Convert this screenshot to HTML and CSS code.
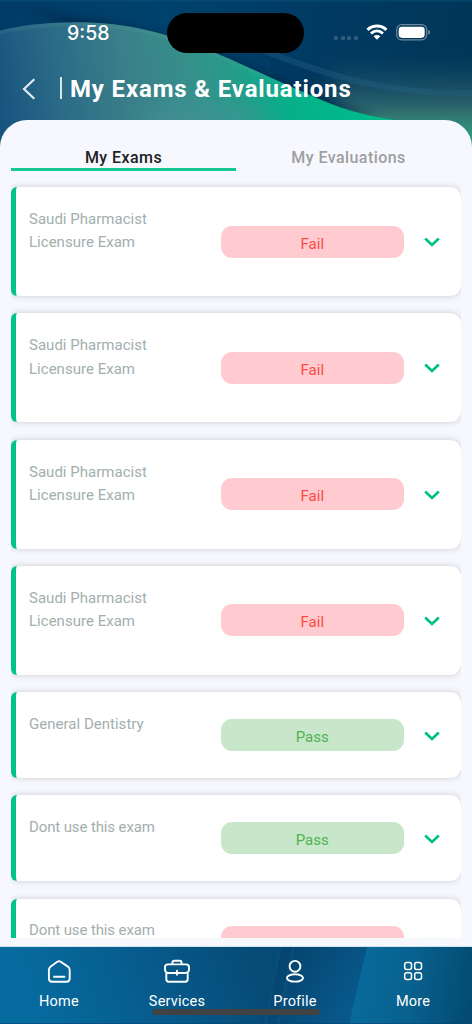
FILE: index.html
```html
<!DOCTYPE html>
<html lang="en">
<head>
<meta charset="utf-8">
<title>My Exams &amp; Evaluations</title>
<link rel="stylesheet" href="styles.css">
</head>
<body>
<svg width="0" height="0" class="defs"><symbol id="chevron" viewBox="0 0 16 10"><path d="M1.2 1.5 8 7.9l6.8-6.4" fill="none" stroke="#00bf88" stroke-width="2.7"/></symbol></svg>
<div class="app">
  <svg class="waves" viewBox="0 0 472 160" preserveAspectRatio="none">
    <defs>
      <linearGradient id="sky" x1="0" y1="0" x2="1" y2="0"><stop offset="0" stop-color="#003c66"/><stop offset=".35" stop-color="#00426d"/><stop offset=".65" stop-color="#003b63"/><stop offset="1" stop-color="#003658"/></linearGradient>
      <linearGradient id="hill" gradientUnits="userSpaceOnUse" x1="0" y1="110" x2="340" y2="60"><stop offset="0" stop-color="#18547f"/><stop offset=".18" stop-color="#2b6b87"/><stop offset=".38" stop-color="#3a7f89"/><stop offset=".55" stop-color="#368f8b"/><stop offset=".68" stop-color="#279b8a"/><stop offset=".82" stop-color="#08ae89"/><stop offset="1" stop-color="#00b98a"/></linearGradient>
      <linearGradient id="haze" gradientUnits="userSpaceOnUse" x1="0" y1="60" x2="0" y2="140"><stop offset="0" stop-color="#3e7273" stop-opacity="0"/><stop offset=".5" stop-color="#3e7273" stop-opacity=".55"/><stop offset=".75" stop-color="#3f8476" stop-opacity=".95"/><stop offset="1" stop-color="#23a283"/></linearGradient>
      <filter id="soft" color-interpolation-filters="sRGB" x="-20%" y="-50%" width="140%" height="200%"><feGaussianBlur stdDeviation="5"/></filter>
      <filter id="softer" color-interpolation-filters="sRGB" x="-40%" y="-80%" width="180%" height="260%"><feGaussianBlur stdDeviation="10"/></filter>
      <filter id="edge" color-interpolation-filters="sRGB"><feGaussianBlur stdDeviation=".5"/></filter>
    </defs>
    <rect width="472" height="160" fill="url(#sky)"/>
    <path d="M0 0h472v1.500H0z" fill="#075078" opacity=".6"/>
    <path d="M265 50C325 73 380 96 472 93V160H300z" fill="#002f52" opacity=".25"/>
    <path d="M330 60H530V190H330z" fill="url(#haze)" filter="url(#softer)"/>
    <path d="M255 48C325 73 380 95 472 93" fill="none" stroke="#26658a" stroke-width="6" opacity=".35"/>
    <path d="M20 5C90 28 130 15 240 63S350 105 380 118L190 80z" fill="#002747" opacity=".85" filter="url(#soft)"/>
    <path d="M-4 31.500C40 20 95 20 135 27.500C195 40 235 62 285 84S345 112 400 121V164H-4z" fill="url(#hill)" filter="url(#edge)"/>
    <ellipse cx="205" cy="118" rx="65" ry="14" fill="#4a929a" opacity=".5" filter="url(#softer)"/>
    <path d="M-4 33.500C40 22 95 22 135 29.500C195 42 235 64 285 86" fill="none" stroke="#66aaa3" stroke-width="4" opacity=".15"/>
  </svg>
  <header class="top">
    <div class="status">
      <span class="clock">9:58</span>
      <span class="island"></span>
      <span class="dots"><i></i><i></i><i></i><i></i></span>
      <svg class="wifi" viewBox="0 0 22 16"><g fill="none" stroke="#fff" stroke-width="3"><path d="M1.500 5.800C7 .7 15 .7 20.500 5.800"/><path d="M5 9.500C8.600 6.200 13.400 6.200 17 9.500"/></g><path d="M7.600 12.300C9.500 10.600 12.500 10.600 14.400 12.300L11 15.700z" fill="#fff"/></svg>
      <svg class="battery" viewBox="0 0 35 17"><rect x=".7" y=".7" width="30" height="15.200" rx="5" fill="none" stroke="#6f889d" stroke-width="1.200"/><rect x="2.700" y="2.700" width="26" height="11.200" rx="3.300" fill="#fff"/><path d="M32.300 5.800c2.200.7 2.200 4.300 0 5z" fill="#8298ab"/></svg>
    </div>
    <div class="titlebar">
      <svg class="back" viewBox="0 0 14 22"><path d="M12.300 1.300 2 11l10.300 9.700" fill="none" stroke="#e3ebf0" stroke-width="2.200"/></svg>
      <span class="bar"></span>
      <h1>My Exams &amp; Evaluations</h1>
    </div>
  </header>
  <main class="sheet">
    <div class="tabs"><div class="tab active"><span>My Exams</span></div><div class="tab"><span>My Evaluations</span></div></div>
    <div class="list">
      <article class="card tall"><p>Saudi Pharmacist<br>Licensure Exam</p><span class="pill fail">Fail</span><svg class="chev"><use href="#chevron"/></svg></article>
      <article class="card tall"><p>Saudi Pharmacist<br>Licensure Exam</p><span class="pill fail">Fail</span><svg class="chev"><use href="#chevron"/></svg></article>
      <article class="card tall"><p>Saudi Pharmacist<br>Licensure Exam</p><span class="pill fail">Fail</span><svg class="chev"><use href="#chevron"/></svg></article>
      <article class="card tall"><p>Saudi Pharmacist<br>Licensure Exam</p><span class="pill fail">Fail</span><svg class="chev"><use href="#chevron"/></svg></article>
      <article class="card"><p>General Dentistry</p><span class="pill pass">Pass</span><svg class="chev"><use href="#chevron"/></svg></article>
      <article class="card"><p class="snug">Dont use this exam</p><span class="pill pass">Pass</span><svg class="chev"><use href="#chevron"/></svg></article>
      <article class="card"><p class="snug">Dont use this exam</p><span class="pill fail"></span><svg class="chev"><use href="#chevron"/></svg></article>
    </div>
  </main>
  <nav class="nav">
    <svg class="navbg" viewBox="0 0 472 77" preserveAspectRatio="none">
      <defs>
        <linearGradient id="n1" gradientUnits="userSpaceOnUse" x1="30" y1="77" x2="250" y2="0"><stop offset="0" stop-color="#066ca0"/><stop offset=".45" stop-color="#075e90"/><stop offset="1" stop-color="#064b77"/></linearGradient>
        <linearGradient id="n2" gradientUnits="userSpaceOnUse" x1="290" y1="0" x2="360" y2="40"><stop offset="0" stop-color="#05446f"/><stop offset="1" stop-color="#08588a"/></linearGradient>
        <linearGradient id="n3" gradientUnits="userSpaceOnUse" x1="355" y1="30" x2="472" y2="45"><stop offset="0" stop-color="#086b9c"/><stop offset=".5" stop-color="#08608d"/><stop offset="1" stop-color="#034b72"/></linearGradient>
      </defs>
      <rect width="472" height="77" fill="url(#n1)"/>
      <path d="M280 0H368L349 77H262z" fill="url(#n2)"/>
      <path d="M279 0h3l-15 77h-4zM292 0h3l-15 77h-4z" fill="#116397" opacity=".25"/>
      <path d="M367 0H472V77H349z" fill="url(#n3)"/>
      <path d="M0 76h472v1H0z" fill="#034675" opacity=".6"/>
    </svg>
    <a class="item"><svg viewBox="0 0 26 26"><path d="M2.900 11.200Q2.900 8.900 4.700 7.600L11.300 2.800Q13 1.600 14.700 2.800L21.900 7.600Q23.700 8.900 23.700 11.200V19.500Q23.700 22.700 20.500 22.700H6.100Q2.900 22.700 2.900 19.500ZM8 17.700H18.500"/></svg><span>Home</span></a>
    <a class="item"><svg viewBox="0 0 26 26"><path d="M4 5.400H22Q25 5.400 25 8.200V10.500Q25 14 20.500 14H5.500Q1 14 1 10.500V8.200Q1 5.400 4 5.400ZM2.300 13.600V20.300Q2.300 22.700 4.700 22.700H21.300Q23.700 22.700 23.700 20.300V13.600M8.400 5.200V3.700Q8.400 1.800 10.300 1.800H15.700Q17.600 1.800 17.600 3.700V5.200M13 11.800V15.800"/></svg><span>Services</span></a>
    <a class="item"><svg viewBox="0 0 26 26"><circle cx="13" cy="7.300" r="5.400"/><ellipse cx="13" cy="18.900" rx="8" ry="3.700"/></svg><span>Profile</span></a>
    <a class="item"><svg class="grid" viewBox="0 0 26 26"><rect x="4.700" y="3.600" width="6.800" height="6.800" rx="2"/><rect x="14.700" y="3.600" width="6.800" height="6.800" rx="2"/><rect x="4.700" y="13.800" width="6.800" height="6.800" rx="2"/><rect x="14.700" y="13.800" width="6.800" height="6.800" rx="2"/></svg><span>More</span></a>
    <span class="indicator"></span>
  </nav>
</div>
</body>
</html>
```
FILE: styles.css
```css
* { box-sizing: border-box; }
body { margin: 0; font-family: Roboto, "Open Sans", sans-serif; background: #f7f8fd; }
.defs { position: absolute; }
.app { position: relative; width: 472px; height: 1024px; overflow: hidden; display: flex; flex-direction: column; }
.waves { position: absolute; top: 0; left: 0; width: 472px; height: 160px; }
.top { position: relative; height: 120px; flex: none; color: #fff; }
.status { display: flex; align-items: center; height: 66px; padding: 0 41px 0 67px; }
.clock { width: 100px; font: 500 19.5px/24px Inter, sans-serif; letter-spacing: 0; }
.island { width: 138px; height: 40px; border-radius: 20px; background: #000; }
.dots { display: flex; gap: 2.700px; margin: 9px 0 0 30px; }
.dots i { width: 4px; height: 4px; border-radius: 1.500px; background: #345c7a; }
.wifi { width: 22px; height: 16px; margin: -2px 0 0 8px; }
.battery { width: 35px; height: 17px; margin: -2px 0 0 8px; flex: none; }
.titlebar { display: flex; align-items: center; height: 46px; padding-left: 22px; }
.back { width: 14px; height: 22px; }
.bar { width: 2px; height: 22px; margin: -2px 8px 0 24px; background: #d7e7e8; }
h1 { margin: 0; font-size: 24px; line-height: 30px; font-weight: 700; letter-spacing: 0.85px; white-space: nowrap; }
.sheet { position: relative; height: 827px; flex: none; padding: 22px 11px 9px; background: #f7f8fd; border-radius: 27px 27px 0 0; display: flex; flex-direction: column; }
.tabs { display: flex; height: 29px; flex: none; }
.tab { width: 225px; text-align: center; font-size: 16px; line-height: 31px; font-weight: 500; letter-spacing: 0.43px; color: #9d9fa1; }
.tab.active { color: #202124; border-bottom: 3px solid #16c893; }
.list { flex: 1; min-height: 0; overflow: hidden; padding-top: 16px; display: flex; flex-direction: column; gap: 17.300px; }
.card { flex: none; display: flex; height: 86px; align-items: center; background: #fff; border-left: 5px solid #00c389; border-radius: 6px 11px 11px 6px; box-shadow: 0 0 6px rgba(40, 45, 60, 0.22); padding-left: 13px; }
.card.tall { height: 109px; }
.card p { align-self: flex-start; width: 191.500px; margin: 21px 0 0; font-size: 15px; line-height: 23.300px; letter-spacing: 0.02px; color: #a2afae; white-space: nowrap; }
.card .snug { margin-top: 24.500px; line-height: 15px; letter-spacing: -0.12px; }
.pill { width: 183.500px; height: 32px; border-radius: 11px; text-align: center; font-size: 15px; line-height: 36px; letter-spacing: 0.05px; }
.fail { background: #ffcbd0; color: #fa4b43; }
.pass { background: #c8e6c9; color: #4fb253; }
.chev { width: 16px; height: 10px; margin: 1px 0 0 20px; }
.nav { position: relative; height: 77px; flex: none; display: flex; color: #fff; box-shadow: 0 -1px 0 #d3e3ec; }
.navbg { position: absolute; inset: 0; width: 472px; height: 77px; }
.item { position: relative; width: 118px; display: flex; flex-direction: column; align-items: center; padding-top: 12px; font-size: 14.500px; line-height: 20px; letter-spacing: 0.2px; }
.item svg { width: 26px; height: 26px; margin-bottom: 7px; fill: none; stroke: #fff; stroke-width: 1.900; stroke-linecap: round; }
.item .grid { stroke-width: 1.500; }
.indicator { position: absolute; left: 152px; top: 62px; width: 168px; height: 6px; border-radius: 3px; background: #414244; }
```
